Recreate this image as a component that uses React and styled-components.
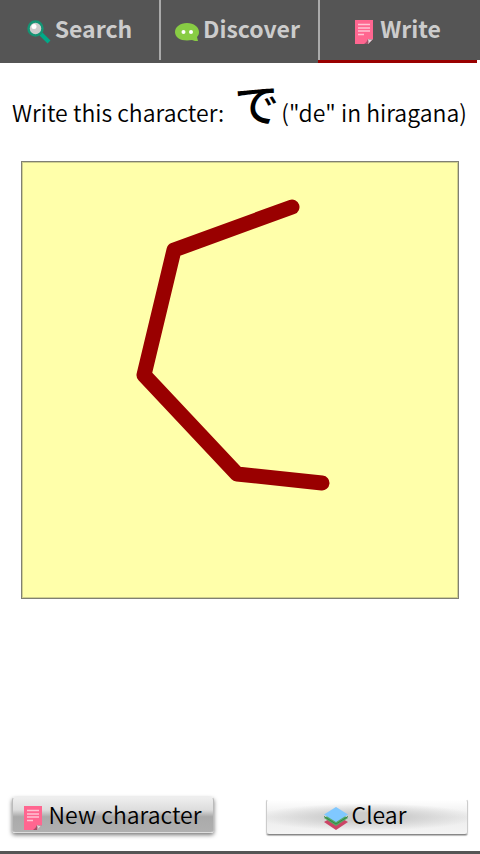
import React from "react";
import styled, { createGlobalStyle } from "styled-components";

const GlobalStyle = createGlobalStyle`
  * { box-sizing: border-box; }
  body {
    margin: 0;
    background: #fff;
    color: #000;
    font-family: "Noto Sans CJK JP", "Noto Sans", sans-serif;
    font-size: 23px;
    font-weight: 350;
    line-height: 32px;
  }
`;

const Page = styled.div`
  display: flex;
  flex-direction: column;
  min-height: 100vh;
  border-bottom: 3px solid #555;
`;

const Tabs = styled.nav`
  display: grid;
  grid-template-columns: repeat(3, 1fr);
  padding-right: 3px;
  background: linear-gradient(#555, #555) 0 0 / 100% 60px no-repeat;
`;

const Tab = styled.a`
  border-bottom: 3px solid ${(p) => (p.$active ? "#990000" : "#555")};
  color: #ccc;
  font-weight: 700;
  text-decoration: none;
`;

const TabLabel = styled.span`
  display: flex;
  align-items: center;
  justify-content: center;
  gap: 4px;
  height: 60px;
  padding: 0 ${(p) => (p.$divided ? "4px" : "0")} 4px 0;
  border-left: ${(p) => (p.$divided ? "2px solid #aaa" : "0")};
`;

const Icon = styled.svg`
  flex: none;
  width: 24px;
  height: 24px;
  margin-top: 8px;
`;

const Main = styled.main`
  flex: 1;
  display: flex;
  flex-direction: column;
`;

const Prompt = styled.p`
  display: flex;
  align-items: baseline;
  margin: 0;
  padding: 8px 8px 0 12px;
  height: 98px;
  white-space: nowrap;
`;

const Kana = styled.span`
  margin: 0 2px 0 10px;
  font-size: 45px;
  font-weight: 500;
  line-height: 64px;
`;

const Pad = styled.svg`
  display: block;
  margin: 0 21px;
  aspect-ratio: 1;
  border: 1px solid #808073;
  box-shadow: inset 0 0 0 1px #d0d08f;
  background: #ffffaa;
`;

const Actions = styled.div`
  display: flex;
  align-items: flex-end;
  justify-content: space-between;
  margin-top: auto;
  padding: 0 12px 16px;
`;

const Button = styled.button`
  display: flex;
  align-items: center;
  justify-content: center;
  gap: 4px;
  width: 42%;
  min-width: 202px;
  height: 36px;
  padding: 0 4px 6px 0;
  border: 1px solid #ccc;
  border-radius: 3px;
  color: #000;
  font: inherit;
  white-space: nowrap;
  background: radial-gradient(ellipse 55% 40% at 50% 50%, #ccc 30%, rgba(204, 204, 204, 0)),
    linear-gradient(#fff, #ececec 50%, #f4f4f4);
  border-color: #fff #ccc #888 #ccc;
  box-shadow: 0 1px 1px #bbb;
`;

const RaisedButton = styled(Button)`
  margin-bottom: 2px;
  padding-bottom: 2px;
  border-color: #eee #bbb #ddd;
  background: linear-gradient(#eee, #ddd 35%, #aaa 55%, #b0b0b0);
  box-shadow: 0 2px 4px #777;
`;

const SearchIcon = () => (
  <Icon viewBox="0 0 24 24" aria-hidden="true">
    <path d="M14 14 L22 22" stroke="#00aa88" strokeWidth="4" />
    <circle cx="8.500" cy="8.500" r="7" fill="#ccc" stroke="#149474" strokeWidth="2.500" />
    <circle cx="7" cy="6.500" r="2.500" fill="#fff" />
  </Icon>
);

const ChatIcon = () => (
  <Icon viewBox="0 0 24 24" aria-hidden="true">
    <path d="M12 3 C5 3 0 7 0 12 C0 17 5 20.500 12 20.500 L17 20 C19 21 21 21 23 21 L22 17 C23.500 15.500 24 14 24 12 C24 7 19 3 12 3Z" fill="#8c4" />
    <circle cx="8.500" cy="12" r="2" fill="#fff" />
    <circle cx="16" cy="12" r="2" fill="#fff" />
  </Icon>
);

const NoteIcon = () => (
  <Icon viewBox="0 0 24 24" aria-hidden="true">
    <path d="M3 0 H21 V19 L16 24 H3Z" fill="#ff6690" />
    <path d="M12 24 Q15 22 16 19 L21 19 L16 24Z" fill="#a04f68" />
    <path d="M16 24 Q17 22 16 19 Q19 20 21 19Z" fill="#ddd" />
    <path d="M6 4.500 H18 M6 8 H18 M6 11 H18 M6 14.500 H12" stroke="#ffc4d4" strokeWidth="1.500" />
  </Icon>
);

const LayersIcon = () => (
  <Icon viewBox="0 0 24 24" aria-hidden="true">
    <path d="M0 16 L12 9 L24 16 L12 24Z" fill="#cc4466" />
    <path d="M0 12 L12 5 L24 12 L12 20Z" fill="#55aa66" />
    <path d="M0 10.500 L12 18 L24 10.500" fill="none" stroke="#358546" strokeWidth="1" />
    <path d="M0 8.500 L12 1 L24 8.500 L12 16Z" fill="#80c8ff" />
  </Icon>
);

const TABS = [
  { label: "Search", icon: SearchIcon },
  { label: "Discover", icon: ChatIcon },
  { label: "Write", icon: NoteIcon, active: true },
];

export default function App() {
  return (
    <>
      <GlobalStyle />
      <Page>
        <Tabs>
          {TABS.map(({ label, icon: TabIcon, active }, i) => (
            <Tab key={label} href={"#" + label.toLowerCase()} $active={active} aria-current={active ? "page" : undefined}>
              <TabLabel $divided={i > 0}>
                <TabIcon />
                {label}
              </TabLabel>
            </Tab>
          ))}
        </Tabs>
        <Main>
          <Prompt>
            <span>Write this character:</span>
            <Kana lang="ja">で</Kana>
            <span>("de" in hiragana)</span>
          </Prompt>
          <Pad viewBox="0 0 436 436" role="img" aria-label="Drawing area">
            <polyline
              points="270,45 152,88 122,213 215,312 300,321"
              fill="none"
              stroke="#990000"
              strokeWidth="15"
              strokeLinecap="round"
              strokeLinejoin="round"
            />
          </Pad>
          <Actions>
            <RaisedButton type="button">
              <NoteIcon />
              New character
            </RaisedButton>
            <Button type="button">
              <LayersIcon />
              Clear
            </Button>
          </Actions>
        </Main>
      </Page>
    </>
  );
}
